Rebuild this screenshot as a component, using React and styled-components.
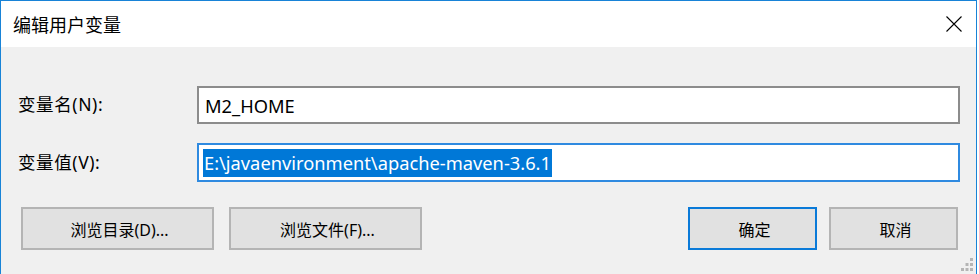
import React from "react";
import styled, { createGlobalStyle } from "styled-components";

const GlobalStyle = createGlobalStyle`
  html, body {
    margin: 0;
    padding: 0;
    background: #ffffff;
  }
  * {
    box-sizing: border-box;
  }
`;

const uiFont = `"Noto Sans", "Noto Sans CJK SC", sans-serif`;

const Window = styled.div`
  width: 977px;
  height: 274px;
  border: 1px solid #1883d7;
  border-bottom: none;
  display: flex;
  flex-direction: column;
  font-family: ${uiFont};
  color: #000;
  background: #f0f0f0;
`;

const TitleBar = styled.div`
  height: 46px;
  flex-shrink: 0;
  background: #ffffff;
  display: flex;
  align-items: center;
  justify-content: space-between;
  padding-left: 12px;
`;

const Title = styled.span`
  font-size: 18px;
  line-height: 1;
  padding-top: 1px;
`;

const CloseButton = styled.div`
  width: 45px;
  height: 46px;
  display: flex;
  align-items: center;
  justify-content: center;
`;

const Body = styled.div`
  flex: 1;
  position: relative;
  padding: 39px 16px 0 17px;
`;

const FieldRow = styled.div`
  display: grid;
  grid-template-columns: 179px 1fr;
  align-items: center;
  height: ${(p) => p.$h}px;
  margin-bottom: ${(p) => p.$mb}px;
`;

const Label = styled.label`
  font-size: 17.5px;
  letter-spacing: 0.6px;
  line-height: 1;
`;

const TextBox = styled.div`
  height: 100%;
  background: #ffffff;
  border: 2px solid ${(p) => (p.$focused ? "#2f8ae0" : "#8c8c8c")};
  display: flex;
  align-items: center;
  padding-left: ${(p) => (p.$focused ? 4 : 6)}px;
  font-size: 18.3px;
  white-space: nowrap;
`;

const Selected = styled.span`
  background: #0078d7;
  color: #ffffff;
  height: 28px;
  display: flex;
  align-items: center;
  padding: 0 1px;
`;

const ButtonRow = styled.div`
  display: flex;
  justify-content: space-between;
  margin-top: 25px;
  padding: 0 2px 0 3px;
`;

const ButtonGroup = styled.div`
  display: flex;
  gap: ${(p) => p.$gap}px;
`;

const Button = styled.button`
  width: ${(p) => p.$w}px;
  height: 43px;
  background: #e1e1e1;
  border: ${(p) => (p.$primary ? "2px solid #0a7ad8" : "2px solid #b4b4b4")};
  font-family: ${uiFont};
  font-size: 16px;
  color: #000;
  padding: 0 0 0 4px;
  display: flex;
  align-items: center;
  justify-content: center;
`;

const Grip = styled.svg`
  position: absolute;
  right: 3px;
  bottom: 3px;
`;

const CloseIcon = () => (
  <svg width="16" height="16" viewBox="0 0 16 16">
    <path d="M0.5 0.5 L15.5 15.5 M15.5 0.5 L0.5 15.5" stroke="#000" strokeWidth="1.1" fill="none" />
  </svg>
);

const ResizeGrip = () => (
  <Grip width="12" height="13" viewBox="0 0 12 13">
    <g fill="#b5b5b5">
      <rect x="9" y="0" width="3" height="3" />
      <rect x="4.5" y="5" width="3" height="3" />
      <rect x="9" y="5" width="3" height="3" />
      <rect x="0" y="10" width="3" height="3" />
      <rect x="4.5" y="10" width="3" height="3" />
      <rect x="9" y="10" width="3" height="3" />
    </g>
  </Grip>
);

export default function App() {
  return (
    <>
      <GlobalStyle />
      <Window>
        <TitleBar>
          <Title>编辑用户变量</Title>
          <CloseButton>
            <CloseIcon />
          </CloseButton>
        </TitleBar>
        <Body>
          <FieldRow $h={38} $mb={19}>
            <Label>变量名(N):</Label>
            <TextBox>M2_HOME</TextBox>
          </FieldRow>
          <FieldRow $h={39} $mb={0}>
            <Label>变量值(V):</Label>
            <TextBox $focused>
              <Selected>E:\javaenvironment\apache-maven-3.6.1</Selected>
            </TextBox>
          </FieldRow>
          <ButtonRow>
            <ButtonGroup $gap={15}>
              <Button $w={193}>浏览目录(D)...</Button>
              <Button $w={193}>浏览文件(F)...</Button>
            </ButtonGroup>
            <ButtonGroup $gap={12}>
              <Button $w={129} $primary>确定</Button>
              <Button $w={129}>取消</Button>
            </ButtonGroup>
          </ButtonRow>
          <ResizeGrip />
        </Body>
      </Window>
    </>
  );
}
